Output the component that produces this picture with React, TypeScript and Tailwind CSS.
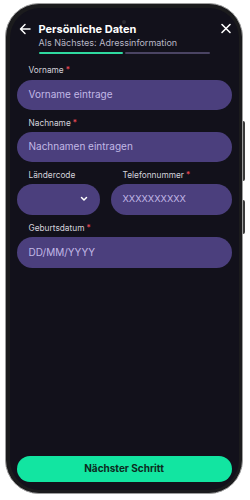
import React from "react";

function Label({ text, req }: { text: string; req?: boolean }) {
  return (
    <div className="h-[10px] flex items-center pl-[12px] text-[8.3px] leading-[10px] text-[#d4d3dc]">
      {text}
      {req && <span className="ml-[2px] text-[#ef4a55]">*</span>}
    </div>
  );
}

function Input({ text, className = "" }: { text: string; className?: string }) {
  return (
    <div
      className={
        "h-[30px] rounded-full bg-[#4b3f7d] flex items-center pl-[12px] text-[10px] text-[#c2b8e6] " +
        className
      }
    >
      {text}
    </div>
  );
}

export default function App() {
  return (
    <div
      className="w-[250px] h-[500px] bg-white pt-[3px] pl-[5px]"
      style={{ fontFamily: "Inter, 'Noto Sans', sans-serif" }}
    >
      <div className="relative w-[238px] h-[491px] rounded-[34px] border-[1.5px] border-[#9d9d9d] bg-[#1b1b1d] p-[3.5px]">
        <div className="absolute right-[-3px] top-[117px] w-[2px] h-[60px] rounded-r bg-[#3a3a3a]" />
        <div className="absolute right-[-3px] top-[196px] w-[2px] h-[34px] rounded-r bg-[#3a3a3a]" />
        <div className="relative w-full h-full rounded-[30px] bg-[#12111b] flex flex-col overflow-hidden">
          <div className="absolute left-[112px] top-[12px] w-[4px] h-[4px] rounded-full bg-[#2a2a30]" />
          {/* header */}
          <div className="pt-[14px] pl-[9px] pr-[7px] flex items-start">
            <svg width="12" height="14" viewBox="0 0 12 14" className="mt-0">
              <path d="M11 7H2M6 2.5L1.5 7L6 11.5" stroke="white" strokeWidth="1.5" fill="none" strokeLinecap="round" strokeLinejoin="round" />
            </svg>
            <div className="ml-[8px] flex-1 flex flex-col">
              <div className="h-[14px] leading-[14px] text-[11px] font-bold text-white">Persönliche Daten</div>
              <div className="mt-[2px] h-[10px] leading-[10px] text-[9px] text-[#b9b8c6]">Als Nächstes: Adressinformation</div>
              <div className="mt-[4px] flex gap-[2px] w-[171px]">
                <div className="h-[2px] w-[84px] bg-[#2fd9a0] rounded-full" />
                <div className="h-[2px] flex-1 bg-[#4a4463] rounded-full" />
              </div>
            </div>
            <svg width="12" height="14" viewBox="0 0 12 14">
              <path d="M2 2.5L10 10.5M10 2.5L2 10.5" stroke="white" strokeWidth="1.6" strokeLinecap="round" />
            </svg>
          </div>
          {/* form */}
          <div className="mt-[11px] px-[7px] flex flex-col">
            <Label text="Vorname" req />
            <Input text="Vorname eintrage" className="mt-[5px]" />
            <div className="mt-[8px]">
              <Label text="Nachname" req />
            </div>
            <Input text="Nachnamen eintragen" className="mt-[4px]" />
            <div className="mt-[8px] flex gap-[11px]">
              <div className="w-[83px] flex flex-col">
                <Label text="Ländercode" />
                <div className="mt-[4px] h-[31px] rounded-full bg-[#4b3f7d] flex items-center justify-end pr-[12px]">
                  <svg width="8" height="6" viewBox="0 0 8 6">
                    <path d="M1.5 1.5L4 4L6.5 1.5" stroke="white" strokeWidth="1.5" fill="none" strokeLinecap="round" strokeLinejoin="round" />
                  </svg>
                </div>
              </div>
              <div className="flex-1 flex flex-col">
                <Label text="Telefonnummer" req />
                <div className="mt-[4px] h-[31px] rounded-full bg-[#4b3f7d] flex items-center pl-[12px] text-[9.3px] text-[#c2b8e6]">
                  XXXXXXXXXX
                </div>
              </div>
            </div>
            <div className="mt-[8px]">
              <Label text="Geburtsdatum" req />
            </div>
            <Input text="DD/MM/YYYY" className="mt-[4px] h-[31px]" />
          </div>
          <div className="flex-1" />
          <div className="px-[7px] pb-[8px]">
            <div className="h-[26px] rounded-full bg-[#12e5a1] flex items-center justify-center text-[10px] font-bold text-[#0c2a20]">
              Nächster Schritt
            </div>
          </div>
        </div>
      </div>
    </div>
  );
}
